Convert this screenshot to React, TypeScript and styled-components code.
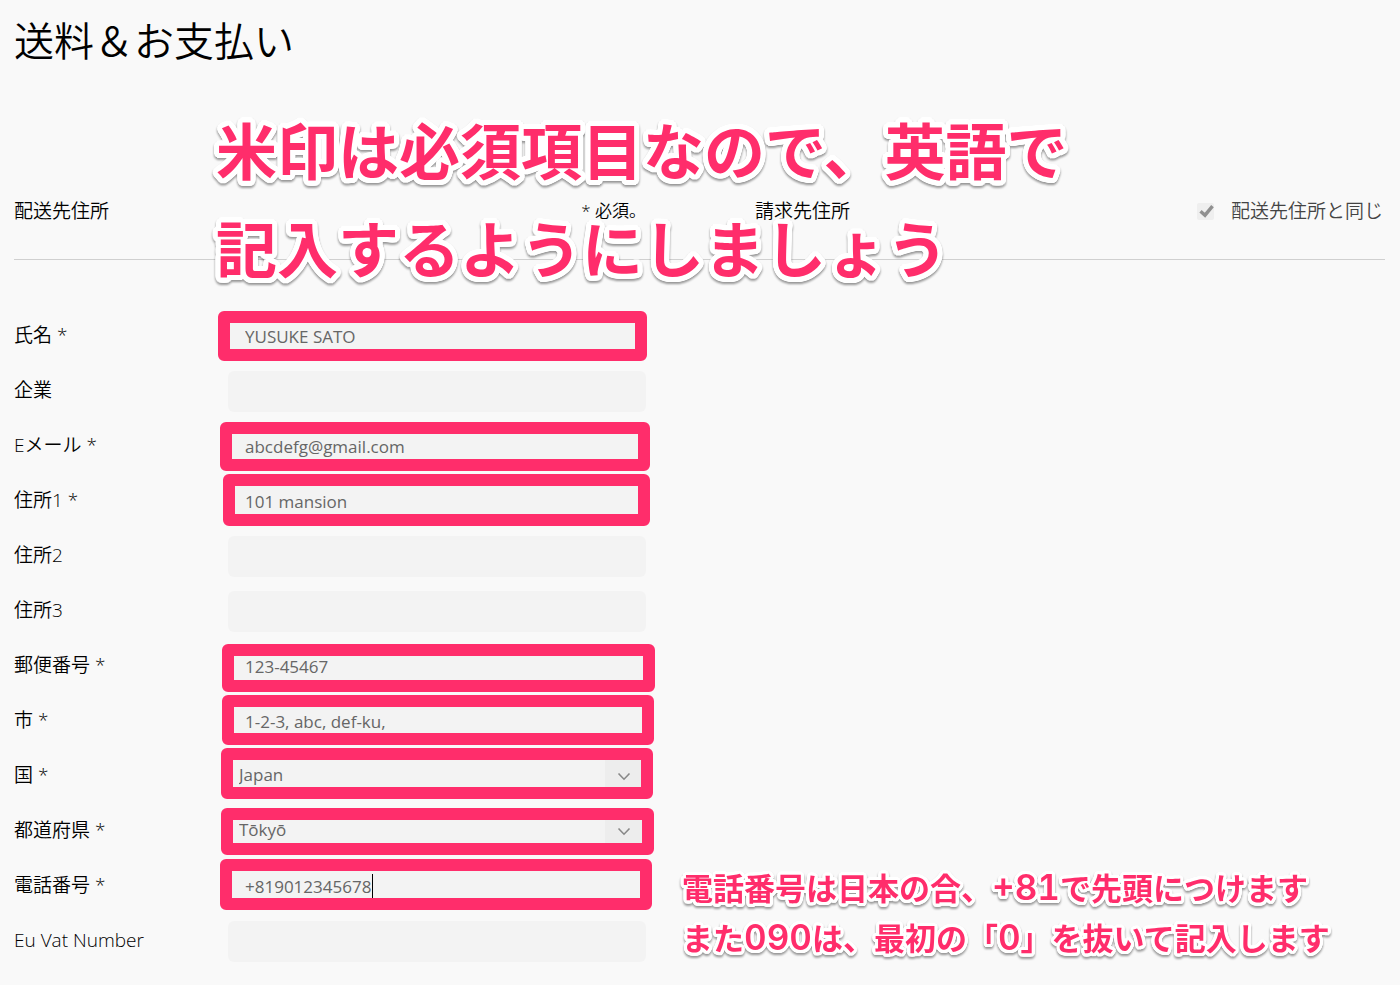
import React from "react";
import styled, { createGlobalStyle, css } from "styled-components";

const PINK = "#ff2d6b";

const GlobalStyle = createGlobalStyle`
  * { box-sizing: border-box; }
  body {
    margin: 0;
    background: #f9f9f9;
    color: #000;
    font-family: "Open Sans", "Noto Sans CJK JP DemiLight", "Noto Sans CJK JP", sans-serif;
    font-weight: 300;
  }
`;

/* A ring of hard shadows gives the lettering an even, round-cornered outline. */
const outline = (radius: number) =>
  Array.from({ length: 32 }, (_, i) => {
    const a = (i / 32) * Math.PI * 2;
    return `${(Math.cos(a) * radius).toFixed(1)}px ${(Math.sin(a) * radius).toFixed(1)}px 0 #fff`;
  }).join(", ");

const Page = styled.main`
  position: relative;
  padding: 14px 15px 24px 14px;
`;

const Title = styled.h1`
  margin: 0;
  font-size: 40px;
  line-height: 54px;
  font-weight: 300;
`;

const Columns = styled.header`
  display: grid;
  grid-template-columns: 632px 1fr;
  column-gap: 109px;
  margin-top: 123px;
  padding-bottom: 28px;
  border-bottom: 1px solid #d0d0d0;
  line-height: 40px;
`;

const ColumnHead = styled.div`
  display: flex;
  justify-content: space-between;
  align-items: center;
`;

const Heading = styled.h2`
  margin: 0;
  font-size: 19px;
  font-weight: 300;
`;

const RequiredHint = styled.span`
  font-size: 17px;
`;

const SameAddress = styled.label`
  display: flex;
  align-items: center;
  gap: 17px;
  padding-right: 2px;
  font-size: 19px;
  color: #444;
`;

const CheckWrap = styled.span`
  display: grid;
  width: 17px;
  height: 17px;
  > * { grid-area: 1 / 1; }
  svg { pointer-events: none; }
`;

const Checkbox = styled.input`
  appearance: none;
  width: 17px;
  height: 17px;
  margin: 0;
  border-radius: 2px;
  background: #efefef;
`;

const Form = styled.form`
  display: grid;
  gap: 14px;
  margin-top: 56px;
`;

const Row = styled.div`
  display: grid;
  grid-template-columns: 214px 418px;
`;

const Label = styled.label`
  font-size: 19px;
  line-height: 38px;
`;

const Field = styled.div`
  position: relative;
  display: grid;
  > * { grid-area: 1 / 1; }
`;

const control = css`
  width: 100%;
  height: 41px;
  border: 0;
  border-radius: 6px;
  outline: 0;
  background: #f3f3f3;
  color: #666;
  font-family: inherit;
  font-size: 17px;
  font-weight: 400;
`;

const TextInput = styled.input`
  ${control}
  padding: 0 17px;
`;

const Select = styled.select`
  ${control}
  appearance: none;
  padding: 0 52px 4px 11px;
`;

const SelectArrow = styled.span`
  justify-self: end;
  display: flex;
  align-items: center;
  justify-content: center;
  width: 41px;
  height: 41px;
  padding-right: 3px;
  border-radius: 0 6px 6px 0;
  background: #ededed;
  pointer-events: none;
`;

const Caret = styled.span`
  position: absolute;
  left: 144px;
  top: 8px;
  width: 1px;
  height: 24px;
  background: #000;
`;

const Frame = styled.div<{ $x: number; $y: number; $w: number; $h: number }>`
  position: absolute;
  left: ${(p) => p.$x}px;
  top: ${(p) => p.$y}px;
  width: ${(p) => p.$w}px;
  height: ${(p) => p.$h}px;
  border: 12px solid ${PINK};
  border-radius: 6px;
  pointer-events: none;
`;

const Callout = styled.p<{ $x: number; $y: number; $size: number; $line: number; $edge: number }>`
  position: absolute;
  left: ${(p) => p.$x}px;
  top: ${(p) => p.$y}px;
  margin: 0;
  color: ${PINK};
  font-family: "Noto Sans CJK JP", sans-serif;
  font-size: ${(p) => p.$size}px;
  line-height: ${(p) => p.$line}px;
  font-weight: 700;
  white-space: nowrap;
  text-shadow: ${(p) => outline(p.$edge)};
  filter: drop-shadow(0 2px 1px rgba(0, 0, 0, 0.4));
  pointer-events: none;
`;

const Digits = styled.span`
  font-family: Inter, sans-serif;
  font-size: 35px;
  line-height: 1;
  font-weight: 600;
  font-variant-numeric: tabular-nums;
`;

type FieldSpec = {
  id: string;
  label: string;
  value?: string;
  kind?: "select";
  caret?: boolean;
};

const fields: FieldSpec[] = [
  { id: "name", label: "氏名 *", value: "YUSUKE SATO" },
  { id: "company", label: "企業" },
  { id: "email", label: "Eメール *", value: "abcdefg@gmail.com" },
  { id: "address1", label: "住所1 *", value: "101 mansion" },
  { id: "address2", label: "住所2" },
  { id: "address3", label: "住所3" },
  { id: "zip", label: "郵便番号 *", value: "123-45467" },
  { id: "city", label: "市 *", value: "1-2-3, abc, def-ku," },
  { id: "country", label: "国 *", value: "Japan", kind: "select" },
  { id: "state", label: "都道府県 *", value: "Tōkyō", kind: "select" },
  { id: "phone", label: "電話番号 *", value: "+819012345678", caret: true },
  { id: "vat", label: "Eu Vat Number" },
];

/* Hand-drawn frames around the required fields: x, y, width, height. */
const frames = [
  [218, 311, 429, 50],
  [220, 422, 430, 49],
  [223, 474, 427, 52],
  [222, 644, 433, 48],
  [222, 695, 432, 50],
  [221, 748, 432, 51],
  [221, 808, 433, 47],
  [220, 859, 432, 51],
];

function FormRow({ id, label, value, kind, caret }: FieldSpec) {
  return (
    <Row>
      <Label htmlFor={id}>{label}</Label>
      <Field>
        {kind === "select" ? (
          <>
            <Select id={id} defaultValue={value}>
              <option>{value}</option>
            </Select>
            <SelectArrow>
              <svg width="14" height="9" viewBox="0 0 14 9" fill="none" stroke="#888" strokeWidth="1.6">
                <path d="M1.5 1.5 7 7.2 12.5 1.5" />
              </svg>
            </SelectArrow>
          </>
        ) : (
          <TextInput id={id} type="text" defaultValue={value} />
        )}
        {caret && <Caret />}
      </Field>
    </Row>
  );
}

export default function App() {
  return (
    <Page>
      <GlobalStyle />
      <Title>送料＆お支払い</Title>
      <Columns>
        <ColumnHead>
          <Heading>配送先住所</Heading>
          <RequiredHint>* 必須。</RequiredHint>
        </ColumnHead>
        <ColumnHead>
          <Heading>請求先住所</Heading>
          <SameAddress>
            <CheckWrap>
              <Checkbox type="checkbox" defaultChecked />
              <svg width="17" height="17" viewBox="0 0 17 17" fill="none" stroke="#909090" strokeWidth="3.4">
                <path d="M3.5 8.2 8 12.2 15.5 3.2" />
              </svg>
            </CheckWrap>
            配送先住所と同じ
          </SameAddress>
        </ColumnHead>
      </Columns>
      <Form>
        {fields.map((f) => (
          <FormRow key={f.id} {...f} />
        ))}
      </Form>

      {frames.map(([x, y, w, h]) => (
        <Frame key={y} $x={x} $y={y} $w={w} $h={h} />
      ))}
      <Callout $x={216} $y={100} $size={61} $line={98} $edge={5}>
        米印は必須項目なので、英語で
        <br />
        記入するようにしましょう
      </Callout>
      <Callout $x={682} $y={862} $size={31} $line={50} $edge={3}>
        電話番号は日本の合、<Digits>+81</Digits>で先頭につけます
        <br />
        また<Digits>090</Digits>は、最初の「<Digits>0</Digits>」を抜いて記入します
      </Callout>
    </Page>
  );
}
